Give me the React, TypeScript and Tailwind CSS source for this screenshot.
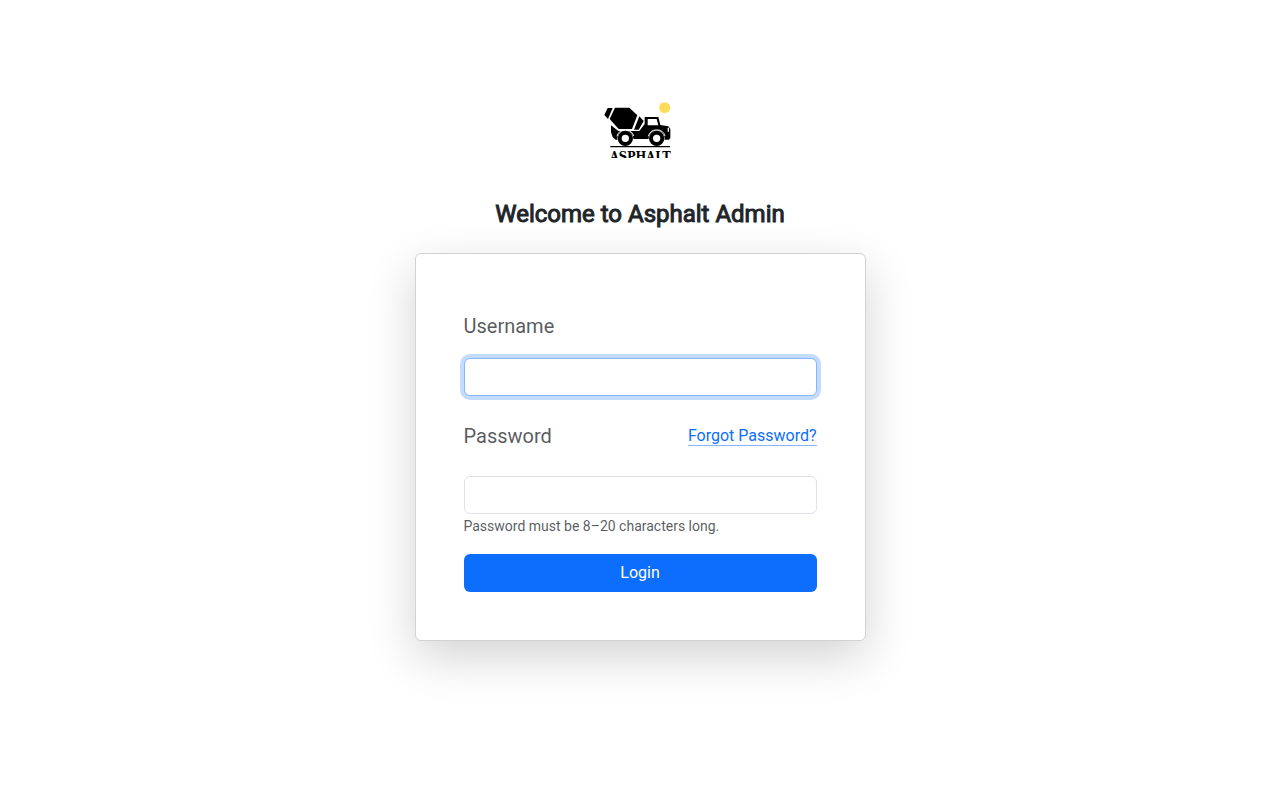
/** Brand mark: cement mixer truck over a cropped wordmark. */
function Logo() {
  return (
    <svg viewBox="0 3 270 186" className="h-[62px] w-[90px]" role="img" aria-label="Asphalt">
      <circle cx="209" cy="38" r="16.5" fill="#ffdc58" />

      {/* mixer drum */}
      <path d="M38 39h15L39 72 28 60z" />
      <path d="M60 38h43l24 23-16 41H71L44 72z" />
      <path d="M133 64l13 14-15 26h-14z" />

      {/* cab, hood and chassis */}
      <path d="M48 91l22 17h63l16-21V66h41l6 24 24 4 6 8v27l-4 5h-17a21 21 0 0 0-41-2h-51a23 23 0 0 0-45 2H62l-9-8-5-14z" />
      <path d="M158 72h27l5 19h-32z" fill="#fff" />
      <path d="M218 98h4v12h-4z" fill="#fff" />
      <path d="M66 124a26 26 0 0 1 50-1M160 124a26 26 0 0 1 50-1" fill="none" stroke="#fff" strokeWidth="3" />

      {/* wheels */}
      <circle cx="91" cy="130" r="24" fill="#fff" />
      <circle cx="185" cy="130" r="24" fill="#fff" />
      <circle cx="91" cy="130" r="17" fill="#fff" stroke="#000" strokeWidth="12" />
      <circle cx="185" cy="130" r="17" fill="#fff" stroke="#000" strokeWidth="12" />

      <path d="M46 153h179v4H46z" />
      <text
        x="136"
        y="199"
        textAnchor="middle"
        className="font-['DejaVu_Serif_Condensed','DejaVu_Serif',serif] text-[38px] font-bold"
      >
        ASPHALT
      </text>
    </svg>
  )
}

const inputClass =
  "block h-[38px] w-full rounded-md border bg-white px-3 text-base text-[#212529] outline-none"

export default function App() {
  return (
    <main className="flex min-h-screen flex-col items-center bg-white px-4 pt-24 pb-12 font-[Roboto,sans-serif] text-base text-[#212529]">
      <Logo />
      <h1 className="mt-10 mb-[22px] text-center text-2xl leading-[33px] font-normal [-webkit-text-stroke:1px_#212529]">
        Welcome to Asphalt Admin
      </h1>

      <form
        className="w-full max-w-[451px] rounded-md border border-[#d2d2d2] bg-white p-12 shadow-[0_16px_48px_rgba(0,0,0,0.175)]"
        onSubmit={(e) => e.preventDefault()}
      >
        <label htmlFor="username" className="mt-2 block text-xl leading-8 text-[#212529]/75">
          Username
        </label>
        <input
          id="username"
          name="username"
          type="text"
          className={`${inputClass} mt-4 border-[#86b7fe] ring-4 ring-[#0d6efd]/25`}
        />

        <div className="mt-6 flex items-center justify-between">
          <label htmlFor="password" className="text-xl leading-8 text-[#212529]/75">
            Password
          </label>
          <a href="#forgot" className="border-b border-[#86b7fe] leading-[18px] text-[#0d6efd]">
            Forgot Password?
          </a>
        </div>
        <input
          id="password"
          name="password"
          type="password"
          aria-describedby="password-help"
          className={`${inputClass} mt-6 border-[#dee2e6]`}
        />
        <p id="password-help" className="mt-0.5 text-sm leading-5 text-[#212529]/75">
          Password must be 8–20 characters long.
        </p>

        <button
          type="submit"
          className="mt-[18px] h-[38px] w-full rounded-md bg-[#0d6efd] text-base text-white"
        >
          Login
        </button>
      </form>
    </main>
  )
}
